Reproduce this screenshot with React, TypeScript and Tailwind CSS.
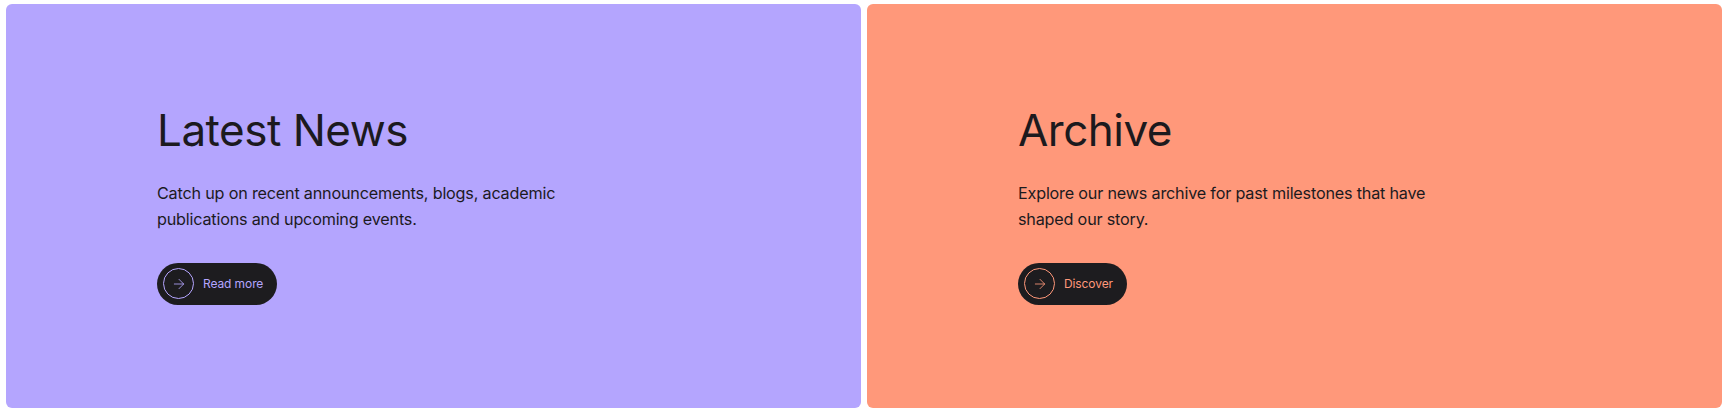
import { ArrowRight } from "lucide-react";

const cards = [
  {
    title: "Latest News",
    text: "Catch up on recent announcements, blogs, academic publications and upcoming events.",
    cta: "Read more",
    bg: "bg-[#b4a5fe]",
    accent: "text-[#b4a5fe]",
    ring: "border-[#b4a5fe]",
  },
  {
    title: "Archive",
    text: "Explore our news archive for past milestones that have shaped our story.",
    cta: "Discover",
    bg: "bg-[#ff987a]",
    accent: "text-[#ff987a]",
    ring: "border-[#ff987a]",
  },
];

export default function App() {
  return (
    <div
      className="grid grid-cols-2 gap-[6px] p-[6px] pt-[4px] bg-white h-[414px]"
      style={{ fontFamily: "Inter, 'Noto Sans', sans-serif" }}
    >
      {cards.map((card) => (
        <section
          key={card.title}
          className={`${card.bg} rounded-[6px] h-[404px] flex flex-col justify-center pl-[151px] pb-[4px]`}
        >
          <h2 className="text-[44px] leading-[52px] tracking-[-0.5px] text-[#1c1a1e] font-normal">
            {card.title}
          </h2>
          <p className="mt-[24px] max-w-[420px] text-[16.2px] leading-[26px] tracking-[-0.2px] text-[#1c1a1e]">
            {card.text}
          </p>
          <div className="mt-[31px]">
            <a
              href="#"
              className="inline-flex items-center h-[42px] pl-[6px] pr-[14px] rounded-full bg-[#1d1c1f]"
            >
              <span
                className={`w-[31px] h-[31px] rounded-full border ${card.ring} flex items-center justify-center ${card.accent}`}
              >
                <ArrowRight size={16} strokeWidth={1.25} />
              </span>
              <span className={`ml-[9px] text-[12px] tracking-[-0.1px] ${card.accent}`}>{card.cta}</span>
            </a>
          </div>
        </section>
      ))}
    </div>
  );
}
